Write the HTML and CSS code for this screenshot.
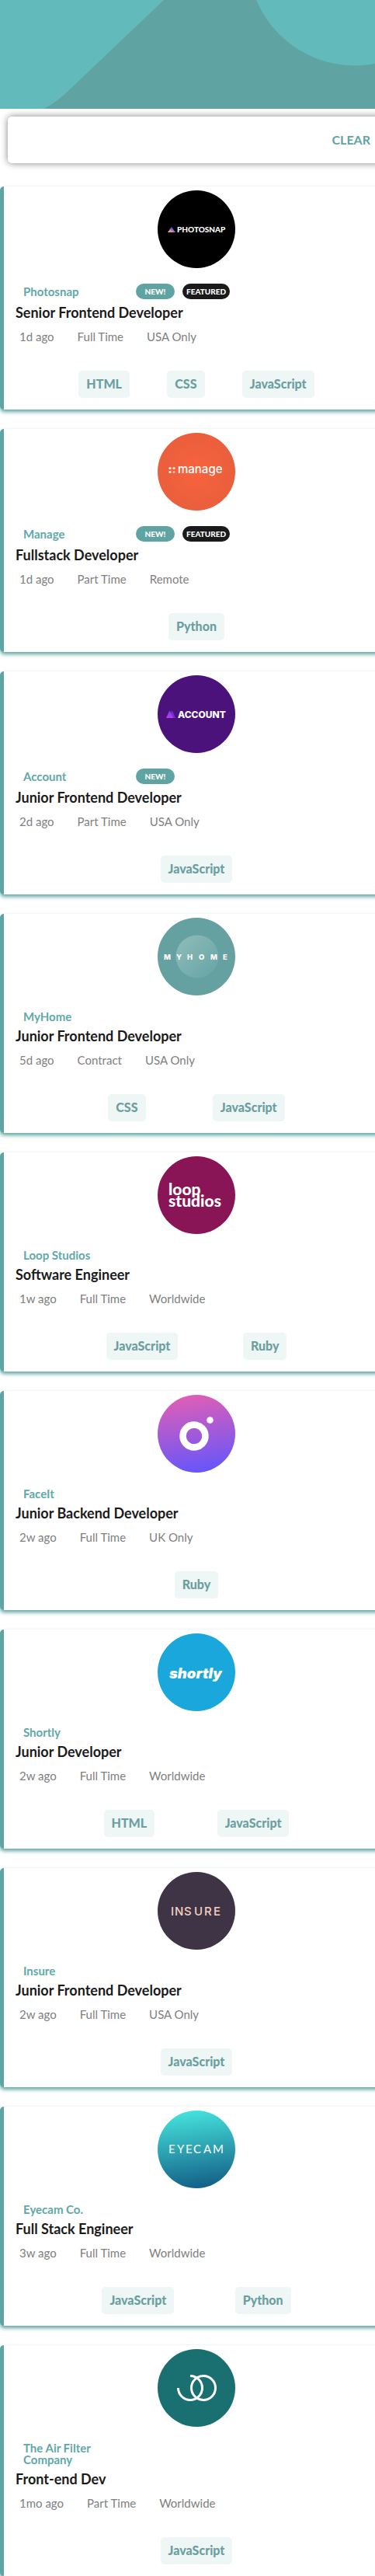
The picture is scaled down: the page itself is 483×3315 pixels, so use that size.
FILE: index.html
```html
<!DOCTYPE html>
<html lang="en">
<head>
<meta charset="utf-8">
<meta name="viewport" content="width=device-width, initial-scale=1">
<title>Job listings</title>
<link rel="stylesheet" href="styles.css">
</head>
<body>
<header class="banner">
  <svg class="banner-art" viewBox="0 0 483 140" preserveAspectRatio="xMinYMin slice" aria-hidden="true">
    <path d="M0 0H211L91 114Q75 130 57 140H0Z"/>
    <circle cx="457" cy="-53" r="137.5"/>
  </svg>
</header>
<main class="page">
  <section class="filter-bar" aria-label="Filters">
    <button class="clear" type="button">CLEAR</button>
  </section>

  <article class="card">
    <svg class="logo" viewBox="0 0 100 100" role="img" aria-label="Photosnap logo">
      <defs><linearGradient id="ps" x1="0" y1="1" x2="1" y2="0"><stop offset="0" stop-color="#ffc593"/><stop offset=".35" stop-color="#d98a9a"/><stop offset=".6" stop-color="#5a60e0"/><stop offset="1" stop-color="#8e3be0"/></linearGradient></defs>
      <circle cx="50" cy="50" r="50"/>
      <path d="M18 47l5 7H13z" fill="url(#ps)"/>
      <text class="logo-text lato" x="25" y="54" font-size="10" font-weight="900">PHOTOSNAP</text>
    </svg>
    <div class="company-row"><span class="company">Photosnap</span><span class="badge">NEW!</span><span class="badge featured">FEATURED</span></div>
    <h2 class="position">Senior Frontend Developer</h2>
    <ul class="meta"><li>1d ago</li><li>Full Time</li><li>USA Only</li></ul>
    <div class="tags"><button type="button">HTML</button><button type="button">CSS</button><button type="button">JavaScript</button></div>
  </article>

  <article class="card">
    <svg class="logo" viewBox="0 0 100 100" role="img" aria-label="Manage logo">
      <defs><radialGradient id="mg"><stop offset="0" stop-color="#f8623d"/><stop offset="1" stop-color="#ea5f3c"/></radialGradient></defs>
      <circle cx="50" cy="50" r="50" fill="url(#mg)"/>
      <g fill="#fff"><circle cx="16" cy="45.500" r="1.500"/><circle cx="21" cy="45.500" r="1.500"/><circle cx="16" cy="50.500" r="1.500"/><circle cx="21" cy="50.500" r="1.500" opacity=".5"/></g>
      <text class="logo-text inter" x="26" y="52" font-size="15" font-weight="500">manage</text>
    </svg>
    <div class="company-row"><span class="company">Manage</span><span class="badge">NEW!</span><span class="badge featured">FEATURED</span></div>
    <h2 class="position">Fullstack Developer</h2>
    <ul class="meta"><li>1d ago</li><li>Part Time</li><li>Remote</li></ul>
    <div class="tags"><button type="button">Python</button></div>
  </article>

  <article class="card">
    <svg class="logo" viewBox="0 0 100 100" role="img" aria-label="Account logo">
      <defs><linearGradient id="ac" x1="0" y1="0" x2="0" y2="1"><stop offset="0" stop-color="#5d45e8"/><stop offset="1" stop-color="#c03bf5"/></linearGradient></defs>
      <circle cx="50" cy="50" r="50" fill="#4b127c"/>
      <path d="M18 45l5 10h-8z" fill="#7434d4" opacity=".7"/><path d="M19 45l4 10h-6z" fill="#7e35d8" opacity=".6"/><path d="M15.500 45l4.500 10h-9z" fill="url(#ac)"/>
      <text class="logo-text inter" x="26" y="54.500" font-size="12" font-weight="800">ACCOUNT</text>
    </svg>
    <div class="company-row"><span class="company">Account</span><span class="badge">NEW!</span></div>
    <h2 class="position">Junior Frontend Developer</h2>
    <ul class="meta"><li>2d ago</li><li>Part Time</li><li>USA Only</li></ul>
    <div class="tags"><button type="button">JavaScript</button></div>
  </article>

  <article class="card">
    <svg class="logo" viewBox="0 0 100 100" role="img" aria-label="MyHome logo">
      <defs><linearGradient id="mh" x1="0" y1="0" x2="1" y2="1"><stop offset="0" stop-color="#8fbdb9"/><stop offset="1" stop-color="#66a3a5"/></linearGradient></defs>
      <circle cx="50" cy="50" r="50" fill="#66a1a2"/><circle cx="51" cy="50" r="27.500" fill="url(#mh)"/>
      <text class="logo-text inter" x="8 24 38 53 68 84" y="53.500" font-size="9.500" font-weight="800">MYHOME</text>
    </svg>
    <div class="company-row"><span class="company">MyHome</span></div>
    <h2 class="position">Junior Frontend Developer</h2>
    <ul class="meta"><li>5d ago</li><li>Contract</li><li>USA Only</li></ul>
    <div class="tags"><button type="button">CSS</button><button type="button">JavaScript</button></div>
  </article>

  <article class="card">
    <svg class="logo" viewBox="0 0 100 100" role="img" aria-label="Loop Studios logo">
      <circle cx="50" cy="50" r="50" fill="#8a1556"/>
      <text class="logo-text lato" font-size="21" font-weight="900"><tspan x="14" y="50">loop</tspan><tspan x="14" y="65">studios</tspan></text>
    </svg>
    <div class="company-row"><span class="company">Loop Studios</span></div>
    <h2 class="position">Software Engineer</h2>
    <ul class="meta"><li>1w ago</li><li>Full Time</li><li>Worldwide</li></ul>
    <div class="tags"><button type="button">JavaScript</button><button type="button">Ruby</button></div>
  </article>

  <article class="card">
    <svg class="logo" viewBox="0 0 100 100" role="img" aria-label="FaceIt logo">
      <defs><linearGradient id="fi" x1=".45" y1="0" x2=".6" y2="1"><stop offset="0" stop-color="#df5eb7"/><stop offset="1" stop-color="#6456fb"/></linearGradient></defs>
      <circle cx="50" cy="50" r="50" fill="url(#fi)"/>
      <circle cx="47" cy="53" r="14.500" fill="none" stroke="#fff" stroke-width="8.500"/><circle cx="67.500" cy="32.500" r="4.300" fill="#fff"/>
    </svg>
    <div class="company-row"><span class="company">FaceIt</span></div>
    <h2 class="position">Junior Backend Developer</h2>
    <ul class="meta"><li>2w ago</li><li>Full Time</li><li>UK Only</li></ul>
    <div class="tags"><button type="button">Ruby</button></div>
  </article>

  <article class="card">
    <svg class="logo" viewBox="0 0 100 100" role="img" aria-label="Shortly logo">
      <circle cx="50" cy="50" r="50" fill="#1aa8dc"/>
      <text class="logo-text inter" x="15" y="57.500" font-size="18.500" font-weight="900" font-style="italic">shortly</text>
    </svg>
    <div class="company-row"><span class="company">Shortly</span></div>
    <h2 class="position">Junior Developer</h2>
    <ul class="meta"><li>2w ago</li><li>Full Time</li><li>Worldwide</li></ul>
    <div class="tags"><button type="button">HTML</button><button type="button">JavaScript</button></div>
  </article>

  <article class="card">
    <svg class="logo" viewBox="0 0 100 100" role="img" aria-label="Insure logo">
      <circle cx="50" cy="50" r="50" fill="#3f3445"/>
      <text class="logo-text insure inter" x="17 22 34 47 60 72" y="55.500" font-size="15" font-weight="500">INSURE</text>
    </svg>
    <div class="company-row"><span class="company">Insure</span></div>
    <h2 class="position">Junior Frontend Developer</h2>
    <ul class="meta"><li>2w ago</li><li>Full Time</li><li>USA Only</li></ul>
    <div class="tags"><button type="button">JavaScript</button></div>
  </article>

  <article class="card">
    <svg class="logo" viewBox="0 0 100 100" role="img" aria-label="Eyecam logo">
      <defs><linearGradient id="ey" x1=".45" y1="0" x2=".58" y2="1"><stop offset="0" stop-color="#45e2dc"/><stop offset="1" stop-color="#135f86"/></linearGradient></defs>
      <circle cx="50" cy="50" r="50" fill="url(#ey)"/>
      <text class="logo-text lato" x="14 25 36 46 59 71" y="55" font-size="15">EYECAM</text>
    </svg>
    <div class="company-row"><span class="company">Eyecam Co.</span></div>
    <h2 class="position">Full Stack Engineer</h2>
    <ul class="meta"><li>3w ago</li><li>Full Time</li><li>Worldwide</li></ul>
    <div class="tags"><button type="button">JavaScript</button><button type="button">Python</button></div>
  </article>

  <article class="card">
    <svg class="logo" viewBox="0 0 100 100" role="img" aria-label="The Air Filter Company logo">
      <circle cx="50" cy="50" r="50" fill="#1a7070"/>
      <g fill="none" stroke="#fff" stroke-width="3"><circle cx="59" cy="50" r="15.500"/><path d="M26.500 50A15.500 15.500 0 1 0 42 34.500"/></g>
    </svg>
    <div class="company-row"><span class="company">The Air Filter Company</span></div>
    <h2 class="position">Front-end Dev</h2>
    <ul class="meta"><li>1mo ago</li><li>Part Time</li><li>Worldwide</li></ul>
    <div class="tags"><button type="button">JavaScript</button></div>
  </article>
</main>
</body>
</html>
```

FILE: styles.css
```css
* {
  box-sizing: border-box;
}

body {
  margin: 0;
  overflow-x: hidden;
  background: #fff;
  color: #1a1a1a;
  font-family: Lato, "Liberation Sans", sans-serif;
}

button {
  border: 0;
  cursor: pointer;
  font-family: inherit;
}

.banner {
  height: 140px;
  overflow: hidden;
  background: #5fa4a2;
}

.banner-art {
  display: block;
  width: 100%;
  height: 100%;
  fill: #63babb;
}

/* The listing runs slightly past the right edge of the window. */
.page {
  display: flex;
  flex-direction: column;
  gap: 25px;
  width: calc(100% + 18px);
  padding-top: 10px;
}

.filter-bar {
  display: flex;
  align-items: center;
  justify-content: flex-end;
  height: 60px;
  margin: 0 0 5px 10px;
  padding-right: 24px;
  border-radius: 5px;
  background: #fff;
  box-shadow: 0 0 10px #808080;
}

.clear {
  padding: 0;
  background: none;
  color: #5fa4a2;
  font-size: 16px;
  font-weight: 700;
  line-height: 20px;
}

.card {
  padding: 5px 0 15px;
  border-left: 5px solid #5fa4a2;
  border-radius: 5px;
  background: #fff;
  box-shadow: 0 3px 5px #5fa4a2;
}

.logo {
  display: block;
  width: 100px;
  height: 100px;
  margin: 0 auto 20px;
}

.logo-text {
  fill: #fff;
}

.insure {
  fill: #f6cfc0;
}

.lato {
  font-family: Lato, sans-serif;
}

.inter {
  font-family: Inter, sans-serif;
}

.company-row {
  display: flex;
  align-items: center;
  gap: 10px;
  padding-left: 25px;
}

.company {
  width: 135px;
  color: #5fa9a8;
  font-size: 15px;
  font-weight: 700;
  line-height: 15px;
}

.badge {
  min-width: 50px;
  padding: 0 5px;
  border-radius: 10px;
  background: #5fa4a2;
  color: #fff;
  font-size: 10px;
  font-weight: 900;
  line-height: 20px;
  text-align: center;
}

.featured {
  background: #1a1a1a;
}

.position {
  margin: 7px 0 13px;
  padding-left: 15px;
  font-size: 18px;
  font-weight: 700;
  line-height: 20px;
}

.meta {
  display: flex;
  gap: 30px;
  margin: 0 0 36px;
  padding: 0 0 0 20px;
  color: #808080;
  font-size: 15px;
  line-height: 16px;
  list-style: none;
}

.tags {
  display: flex;
  justify-content: space-evenly;
  width: 400px;
  max-width: 100%;
  margin: 0 auto;
}

.tags button {
  height: 35px;
  padding: 0 10px 2px;
  border-radius: 5px;
  background: #eef6f6;
  color: #6b9f9f;
  font-size: 16px;
  font-weight: 900;
}
```
